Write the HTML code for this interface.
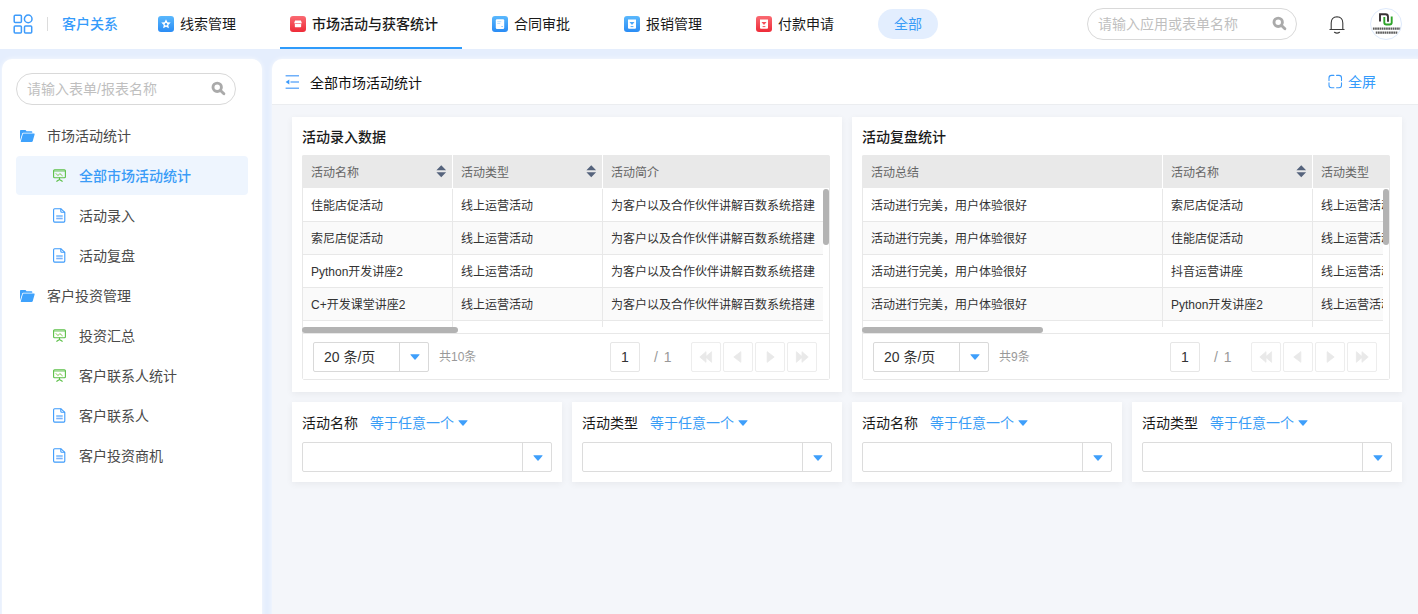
<!DOCTYPE html>
<html lang="zh-CN">
<head>
<meta charset="utf-8">
<title>全部市场活动统计</title>
<style>
*{box-sizing:border-box;margin:0;padding:0}
html,body{width:1418px;height:614px;overflow:hidden}
body{position:relative;background:#e5eefd;font-family:"Liberation Sans","Noto Sans CJK SC",sans-serif;font-size:14px;color:#333}
.abs{position:absolute}
.t{position:absolute;white-space:nowrap;line-height:20px;height:20px}
#hdr{position:absolute;left:0;top:0;width:1418px;height:49px;background:#fff}
.nav{position:absolute;top:14px;font-size:14px;line-height:20px;height:20px;white-space:nowrap;color:#1a1a1a}
.nico{position:absolute;top:16px;width:16px;height:16px;border-radius:3px;overflow:hidden}
.nico.b{background:linear-gradient(#5ab8fd,#2a8cf5)}
.nico.r{background:linear-gradient(#fa6a72,#ee2b38)}
.nico svg{position:absolute;left:0;top:0}
#side{position:absolute;left:2px;top:59px;width:260px;height:565px;background:#fff;border-radius:10px;box-shadow:0 0 5px rgba(255,255,255,.75)}
.sitem{position:absolute;left:77px;font-size:14px;line-height:20px;color:#4a4a4a;white-space:nowrap}
.sgrp{position:absolute;left:45px;font-size:14px;line-height:20px;color:#4a4a4a;white-space:nowrap}
.sic{position:absolute}
#main{position:absolute;left:272px;top:59px;width:1160px;height:565px;background:#f4f6fa;border-radius:10px 0 0 0;overflow:hidden;box-shadow:0 0 5px rgba(255,255,255,.75)}
#mbar{position:absolute;left:0;top:0;width:1160px;height:46px;background:#fff;border-bottom:1px solid #ebedf0}
.card{position:absolute;background:#fff;box-shadow:0 2px 7px rgba(0,0,0,.055)}
.ctitle{position:absolute;left:10px;top:10px;font-size:14px;font-weight:500;line-height:20px;color:#1a1a1a;white-space:nowrap}
.tbl{position:absolute;left:10px;top:38px;width:528px;height:225px;overflow:hidden;background:#fff;border-radius:2px}
.tbd{position:absolute;left:0;top:0;width:528px;height:225px;border:1px solid #e8e8e8;border-radius:2px}
.th{position:absolute;top:0;height:33px;background:#e9e9e9;font-size:12px;line-height:36px;color:#666;padding-left:8px;white-space:nowrap;border-left:1px solid #fff;overflow:hidden}
.th.f{border-left-color:#e9e9e9}
.td{position:absolute;top:0;height:33px;font-size:12px;line-height:34px;color:#333;padding-left:8px;white-space:nowrap;overflow:hidden;border-left:1px solid #e8e8e8;border-bottom:1px solid #e8e8e8}
.row{position:absolute;left:0;width:521px;height:33px;overflow:hidden}
.row.alt{background:#fafafa}
.sort{position:absolute;top:10px;width:10.500px;height:12.500px}
.hs{position:absolute;left:0;top:172px;height:6px;border-radius:3px;background:#b3b3b3}
.vs{position:absolute;left:521px;top:34px;width:6px;height:56px;border-radius:3px;background:#b3b3b3}
.pg{position:absolute;left:1px;top:178px;width:526px;height:46px;border-top:1px solid #e8e8e8;background:#fff}
.psel{position:absolute;left:10px;top:8px;width:116px;height:30px;border:1px solid #d9d9d9;border-radius:2px;font-size:14px;line-height:28px;padding-left:10px;color:#333}
.psel i{position:absolute;left:85px;top:0;width:1px;height:28px;background:#d9d9d9}
.caret{position:absolute;width:10px;height:6px}
.ptot{position:absolute;left:136px;top:13px;font-size:12px;line-height:20px;color:#999}
.pinp{position:absolute;left:307px;top:8px;width:30px;height:30px;border:1px solid #e6e6e6;border-radius:2px;text-align:center;font-size:14px;line-height:28px;color:#333}
.pof{position:absolute;left:351px;top:13px;font-size:14px;line-height:20px;color:#999;word-spacing:2px}
.pbtn{position:absolute;top:8px;width:30px;height:30px;border:1px solid #ededed;border-radius:2px}
.fl{position:absolute;left:10px;top:11px;font-size:14px;line-height:20px;color:#1a1a1a;white-space:nowrap}
.fo{position:absolute;left:78px;top:11px;font-size:14px;line-height:20px;color:#3a9df6;white-space:nowrap}
.fsel{position:absolute;left:10px;top:40px;width:250px;height:30px;border:1px solid #dcdcdc;border-radius:2px;background:#fff}
.fsel i{position:absolute;left:219px;top:0;width:1px;height:28px;background:#dcdcdc}
</style>
</head>
<body>
<div id="hdr">
  <svg class="abs" style="left:13px;top:14px" width="20" height="20" viewBox="0 0 20 20" fill="none" stroke="#3d9bfb" stroke-width="1.500"><rect x="1.200" y="1.200" width="7.200" height="7.200" rx="1"/><circle cx="15.200" cy="4.900" r="3.800"/><rect x="1.200" y="11.900" width="7.200" height="7.200" rx="1"/><rect x="11.500" y="11.900" width="7.200" height="7.200" rx="1"/></svg>
  <div class="abs" style="left:47px;top:17px;width:1px;height:14px;background:#dcdcdc"></div>
  <div class="nav" style="left:62px;color:#359bfb;font-weight:500">客户关系</div>
  <div class="nico b" style="left:158px"><svg width="16" height="16" viewBox="0.700 0.700 14.600 14.600"><path d="M8 3.6l1.3 2.7 3 .4-2.2 2.1.5 3L8 10.4 5.4 11.8l.5-3L3.700 6.700l3-.4z" fill="#fff"/><circle cx="8" cy="8.300" r="1.100" fill="#3d9ef8"/></svg></div>
  <div class="nav" style="left:180px">线索管理</div>
  <div class="nico r" style="left:290px"><svg width="16" height="16" viewBox="-1.400 -1.200 18.800 18.800"><path d="M4.600 4h6.800l1 2.600q-.1 1-1.100 1t-1.100-1q-.1 1-1.100 1T8 6.600q-.1 1-1.100 1t-1.100-1q-.1 1-1.100 1t-1.100-1z" fill="#fff"/><path d="M4.300 8.300h7.400v3.200q0 .5-.5.500H4.800q-.5 0-.5-.5z" fill="#fff"/></svg></div>
  <div class="nav" style="left:312px;font-weight:500">市场活动与获客统计</div>
  <div class="abs" style="left:280px;top:47px;width:182px;height:2px;background:#2e9bfb"></div>
  <div class="nico b" style="left:492px"><svg width="16" height="16" viewBox="0 0 16 16"><rect x="3.800" y="3.300" width="8.400" height="9.600" rx="1.200" fill="#fff"/><path d="M5.300 5.700h4M5.300 7.500h3" stroke="#bfe0fd" stroke-width="1"/><path d="M9 10h2.200l-1.100 1.300z" fill="#7cc0fb"/></svg></div>
  <div class="nav" style="left:514px">合同审批</div>
  <div class="nico b" style="left:624px"><svg width="16" height="16" viewBox="0 0 16 16"><path d="M4 3.500h8v8.300q0 1-1 1H5q-1 0-1-1z" fill="#fff"/><path d="M5.500 6h5L8 9z" fill="#4aa8fa"/><path d="M6.600 10.600h2.800" stroke="#4aa8fa" stroke-width="1"/></svg></div>
  <div class="nav" style="left:646px">报销管理</div>
  <div class="nico r" style="left:756px"><svg width="16" height="16" viewBox="0 0 16 16"><path d="M4 3.500h8v8.300q0 1-1 1H5q-1 0-1-1z" fill="#fff"/><path d="M5.500 6h5L8 9z" fill="#f4515b"/><path d="M6.600 10.600h2.800" stroke="#f4515b" stroke-width="1"/></svg></div>
  <div class="nav" style="left:778px">付款申请</div>
  <div class="abs" style="left:878px;top:9px;width:60px;height:30px;border-radius:15px;background:#e3eefe;color:#3a9cf7;font-size:14px;line-height:30px;text-align:center">全部</div>
  <div class="abs" style="left:1087px;top:8px;width:210px;height:32px;border:1px solid #d9d9d9;border-radius:16px;font-size:14px;line-height:30px;color:#bfbfbf;padding-left:10px">请输入应用或表单名称<svg class="abs" style="left:184px;top:7px" width="16" height="16" viewBox="0 0 16 16" fill="none" stroke="#aaa" stroke-width="2.900" stroke-linecap="round"><circle cx="6.200" cy="6.300" r="4.200"/><path d="M10 10L12.900 12.800"/></svg></div>
  <svg class="abs" style="left:1328px;top:14px" width="18" height="22" viewBox="0 0 18 22" fill="none" stroke="#3c3c3c" stroke-width="1.100" stroke-linecap="round"><path d="M1.900 15.500h14.200M3.200 15.300V9q0-6 5.800-6.300Q14.800 3 14.800 9v6.300"/><path d="M6.500 18.300q2.500 1.600 5 0" stroke-width="1.200"/></svg>
  <div class="abs" style="left:1370px;top:8px;width:32px;height:32px;border-radius:16px;border:1px solid #deeafc;background:#fff;overflow:hidden">
<svg class="abs" style="left:-1px;top:-1px" width="32" height="32" viewBox="0 0 32 32" fill="none"><path d="M10 13.500V6.300h5.500q2.500 0 2.500 2.500v5" stroke="#3a3335" stroke-width="1.900"/><path d="M14.300 9v5.500q0 2 2 2h3.400q2 0 2-2V8.500" stroke="#2fa52a" stroke-width="1.900"/><path d="M2.900 20.600h27.400M5.800 24.700h21.500" stroke="#5c5c5c" stroke-width="2.200" stroke-dasharray="1.700 .5"/></svg></div>
</div>

<div id="side">
  <div class="abs" style="left:14px;top:14px;width:220px;height:32px;border:1px solid #d9d9d9;border-radius:16px;font-size:14px;line-height:30px;color:#bfbfbf;padding-left:10px">请输入表单/报表名称<svg class="abs" style="left:194px;top:7px" width="16" height="16" viewBox="0 0 16 16" fill="none" stroke="#aaa" stroke-width="2.900" stroke-linecap="round"><circle cx="6.200" cy="6.300" r="4.200"/><path d="M10 10L12.900 12.800"/></svg></div>
  <div class="abs" style="left:14px;top:97px;width:232px;height:39px;background:#eef5fe;border-radius:4px"></div>
  <svg class="sic" style="left:18px;top:71px" width="15" height="13" viewBox="0 0 15 13"><path d="M0 .8q0-.8.800-.8h4.700l1 1.300h5q.8 0 .8.800v.7H3.300q-.8 0-1.100.8L0 10.500z" fill="#3fa2fc"/><path d="M3.300 3.600h10.800q.8 0 .5.800L12.700 11.300q-.3.800-1.100.8H1.300q-.8 0-.5-.8l1.900-6.900q.2-.8.800-.8z" fill="#3fa2fc"/></svg>
  <div class="sgrp" style="top:67px">市场活动统计</div>
  <svg class="sic" style="left:50.500px;top:110px" width="13" height="13" viewBox="0 0 13 13" fill="none" stroke="#5cc048" stroke-width="1.100"><rect x=".6" y=".8" width="11.800" height="8" rx="1"/><path d="M.6 2h11.800" stroke-width=".9"/><path d="M6.500 8.800v1.600M3.800 12.300l2.700-1.800 2.700 1.800" stroke-linecap="round"/><path d="M2.800 4.300l2.200 2.300 1.800-2 2.800 2.300" stroke="#7ec94a" stroke-width="1"/></svg>
  <div class="sitem" style="top:107px;color:#3a9cf7;font-weight:500">全部市场活动统计</div>
  <svg class="sic" style="left:51px;top:149px" width="13" height="15" viewBox="0 0 13 15" fill="none" stroke="#3d9bfb" stroke-width="1.100" stroke-linejoin="round"><path d="M1.600.7h6.200l4 3.600v8.800q0 1-1 1H1.600q-1 0-1-1V1.700q0-1 1-1z"/><path d="M7.800.7v2.600q0 1 1 1h3"/><path d="M3.200 8h6.500"/><path d="M3.200 10.500h6.500" stroke-width="1.600" stroke="#7ab2fb"/></svg>
  <div class="sitem" style="top:147px">活动录入</div>
  <svg class="sic" style="left:51px;top:189px" width="13" height="15" viewBox="0 0 13 15" fill="none" stroke="#3d9bfb" stroke-width="1.100" stroke-linejoin="round"><path d="M1.600.7h6.200l4 3.600v8.800q0 1-1 1H1.600q-1 0-1-1V1.700q0-1 1-1z"/><path d="M7.800.7v2.600q0 1 1 1h3"/><path d="M3.200 8h6.500"/><path d="M3.200 10.500h6.500" stroke-width="1.600" stroke="#7ab2fb"/></svg>
  <div class="sitem" style="top:187px">活动复盘</div>
  <svg class="sic" style="left:18px;top:231px" width="15" height="13" viewBox="0 0 15 13"><path d="M0 .8q0-.8.800-.8h4.700l1 1.300h5q.8 0 .8.800v.7H3.300q-.8 0-1.100.8L0 10.500z" fill="#3fa2fc"/><path d="M3.300 3.600h10.800q.8 0 .5.800L12.700 11.300q-.3.800-1.100.8H1.300q-.8 0-.5-.8l1.900-6.900q.2-.8.800-.8z" fill="#3fa2fc"/></svg>
  <div class="sgrp" style="top:227px">客户投资管理</div>
  <svg class="sic" style="left:50.500px;top:270px" width="13" height="13" viewBox="0 0 13 13" fill="none" stroke="#5cc048" stroke-width="1.100"><rect x=".6" y=".8" width="11.800" height="8" rx="1"/><path d="M.6 2h11.800" stroke-width=".9"/><path d="M6.500 8.800v1.600M3.800 12.300l2.700-1.800 2.700 1.800" stroke-linecap="round"/><path d="M2.800 4.300l2.200 2.300 1.800-2 2.800 2.300" stroke="#7ec94a" stroke-width="1"/></svg>
  <div class="sitem" style="top:267px">投资汇总</div>
  <svg class="sic" style="left:50.500px;top:310px" width="13" height="13" viewBox="0 0 13 13" fill="none" stroke="#5cc048" stroke-width="1.100"><rect x=".6" y=".8" width="11.800" height="8" rx="1"/><path d="M.6 2h11.800" stroke-width=".9"/><path d="M6.500 8.800v1.600M3.800 12.300l2.700-1.800 2.700 1.800" stroke-linecap="round"/><path d="M2.800 4.300l2.200 2.300 1.800-2 2.800 2.300" stroke="#7ec94a" stroke-width="1"/></svg>
  <div class="sitem" style="top:307px">客户联系人统计</div>
  <svg class="sic" style="left:51px;top:349px" width="13" height="15" viewBox="0 0 13 15" fill="none" stroke="#3d9bfb" stroke-width="1.100" stroke-linejoin="round"><path d="M1.600.7h6.200l4 3.600v8.800q0 1-1 1H1.600q-1 0-1-1V1.700q0-1 1-1z"/><path d="M7.800.7v2.600q0 1 1 1h3"/><path d="M3.200 8h6.500"/><path d="M3.200 10.500h6.500" stroke-width="1.600" stroke="#7ab2fb"/></svg>
  <div class="sitem" style="top:347px">客户联系人</div>
  <svg class="sic" style="left:51px;top:389px" width="13" height="15" viewBox="0 0 13 15" fill="none" stroke="#3d9bfb" stroke-width="1.100" stroke-linejoin="round"><path d="M1.600.7h6.200l4 3.600v8.800q0 1-1 1H1.600q-1 0-1-1V1.700q0-1 1-1z"/><path d="M7.800.7v2.600q0 1 1 1h3"/><path d="M3.200 8h6.500"/><path d="M3.200 10.500h6.500" stroke-width="1.600" stroke="#7ab2fb"/></svg>
  <div class="sitem" style="top:387px">客户投资商机</div>
</div>

<div id="main">
  <div id="mbar">
    <svg class="abs" style="left:13px;top:15px" width="15" height="16" viewBox="0 0 15 16" fill="none" stroke="#6fb0fa" stroke-width="1.500"><path d="M.6 1.700H14M5.500 8H14M.6 14.300H14"/><path d="M4.300 5.600v4.800L.6 8z" fill="#3d9bfb" stroke="none"/></svg>
    <div class="t" style="left:38px;top:14px;font-size:14px;color:#111">全部市场活动统计</div>
    <svg class="abs" style="left:1056px;top:15px" width="15" height="15" viewBox="0 0 15 15" fill="none" stroke="#3d9bfb" stroke-width="1.100" stroke-linecap="round"><path d="M5.900 1.400H3.500Q1 1.400 1 3.900V6.600M8.600 1.400H11Q13.500 1.400 13.500 3.900V6.600M5.900 13.800H3.500Q1 13.800 1 11.300V8.800M8.600 13.800H11Q13.500 13.800 13.500 11.300V8.800"/></svg>
    <div class="t" style="left:1076px;top:13px;font-size:14px;color:#359bfb">全屏</div>
  </div>
  <div class="card" style="left:20px;top:58px;width:550px;height:275px">
    <div class="ctitle">活动录入数据</div>
    <div class="tbl">
      <div class="tbd"></div>
      <div class="th f" style="left:0px;width:150px">活动名称<svg class="sort" style="left:133px" viewBox="0 0 10.500 12.500" preserveAspectRatio="none"><path d="M5.250 0.200L10.100 5.200H0.400Z M5.250 12.300L10.100 7.300H0.400Z" fill="#55637c"/></svg></div><div class="th" style="left:150px;width:150px">活动类型<svg class="sort" style="left:133px" viewBox="0 0 10.500 12.500" preserveAspectRatio="none"><path d="M5.250 0.200L10.100 5.200H0.400Z M5.250 12.300L10.100 7.300H0.400Z" fill="#55637c"/></svg></div><div class="th" style="left:300px;width:228px">活动简介</div><div class="row" style="top:34px"><div class="td" style="left:0px;width:150px">佳能店促活动</div><div class="td" style="left:150px;width:150px">线上运营活动</div><div class="td" style="left:300px;width:228px">为客户以及合作伙伴讲解百数系统搭建</div></div><div class="row alt" style="top:67px"><div class="td" style="left:0px;width:150px">索尼店促活动</div><div class="td" style="left:150px;width:150px">线上运营活动</div><div class="td" style="left:300px;width:228px">为客户以及合作伙伴讲解百数系统搭建</div></div><div class="row" style="top:100px"><div class="td" style="left:0px;width:150px">Python开发讲座2</div><div class="td" style="left:150px;width:150px">线上运营活动</div><div class="td" style="left:300px;width:228px">为客户以及合作伙伴讲解百数系统搭建</div></div><div class="row alt" style="top:133px"><div class="td" style="left:0px;width:150px">C+开发课堂讲座2</div><div class="td" style="left:150px;width:150px">线上运营活动</div><div class="td" style="left:300px;width:228px">为客户以及合作伙伴讲解百数系统搭建</div></div><div class="row" style="top:166px"><div class="td" style="left:0px;width:150px"></div><div class="td" style="left:150px;width:150px"></div><div class="td" style="left:300px;width:228px"></div></div>
      <div class="abs" style="left:521px;top:34px;width:6px;height:138px;background:#fff"></div>
      <div class="abs" style="left:1px;top:172px;width:526px;height:6px;background:#fff"></div>
      <div class="hs" style="width:156px"></div>
      <div class="vs"></div>
      <div class="pg">
      <div class="psel">20 条/页<i></i><svg class="caret" style="left:96px;top:11px" viewBox="0 0 10 6"><path d="M0.8 0.3H9.2Q9.9 0.5 9.4 1.1L5.5 5.5Q5 6 4.5 5.5L0.6 1.1Q0.1 0.5 0.8 0.3Z" fill="#3e9ffb"/></svg></div>
      <div class="ptot">共10条</div>
      <div class="pinp">1</div>
      <div class="pof">/ 1</div>
      <div class="pbtn" style="left:388px"><svg class="abs" style="left:6px;top:7px" width="16" height="14" viewBox="0 0 16 14" fill="#e9e9e9" stroke="#e9e9e9" stroke-width="0.800" stroke-linejoin="round"><path d="M8 1.700L1.800 7L8 12.300Z M13.600 1.700L7.400 7L13.600 12.300Z"/></svg></div><div class="pbtn" style="left:420px"><svg class="abs" style="left:6px;top:7px" width="16" height="14" viewBox="0 0 16 14" fill="#e9e9e9" stroke="#e9e9e9" stroke-width="0.800" stroke-linejoin="round"><path d="M10.800 1.700L3.800 7L10.800 12.300Z"/></svg></div><div class="pbtn" style="left:452px"><svg class="abs" style="left:6px;top:7px" width="16" height="14" viewBox="0 0 16 14" fill="#e9e9e9" stroke="#e9e9e9" stroke-width="0.800" stroke-linejoin="round"><path d="M5.200 1.700L12.200 7L5.200 12.300Z"/></svg></div><div class="pbtn" style="left:484px"><svg class="abs" style="left:6px;top:7px" width="16" height="14" viewBox="0 0 16 14" fill="#e9e9e9" stroke="#e9e9e9" stroke-width="0.800" stroke-linejoin="round"><path d="M8 1.700L14.200 7L8 12.300Z M2.400 1.700L8.600 7L2.400 12.300Z"/></svg></div>
    </div>
    </div>
  </div>
  <div class="card" style="left:580px;top:58px;width:550px;height:275px">
    <div class="ctitle">活动复盘统计</div>
    <div class="tbl">
      <div class="tbd"></div>
      <div class="th f" style="left:0px;width:300px">活动总结</div><div class="th" style="left:300px;width:150px">活动名称<svg class="sort" style="left:133px" viewBox="0 0 10.500 12.500" preserveAspectRatio="none"><path d="M5.250 0.200L10.100 5.200H0.400Z M5.250 12.300L10.100 7.300H0.400Z" fill="#55637c"/></svg></div><div class="th" style="left:450px;width:78px">活动类型</div><div class="row" style="top:34px"><div class="td" style="left:0px;width:300px">活动进行完美，用户体验很好</div><div class="td" style="left:300px;width:150px">索尼店促活动</div><div class="td" style="left:450px;width:78px">线上运营活动</div></div><div class="row alt" style="top:67px"><div class="td" style="left:0px;width:300px">活动进行完美，用户体验很好</div><div class="td" style="left:300px;width:150px">佳能店促活动</div><div class="td" style="left:450px;width:78px">线上运营活动</div></div><div class="row" style="top:100px"><div class="td" style="left:0px;width:300px">活动进行完美，用户体验很好</div><div class="td" style="left:300px;width:150px">抖音运营讲座</div><div class="td" style="left:450px;width:78px">线上运营活动</div></div><div class="row alt" style="top:133px"><div class="td" style="left:0px;width:300px">活动进行完美，用户体验很好</div><div class="td" style="left:300px;width:150px">Python开发讲座2</div><div class="td" style="left:450px;width:78px">线上运营活动</div></div><div class="row" style="top:166px"><div class="td" style="left:0px;width:300px"></div><div class="td" style="left:300px;width:150px"></div><div class="td" style="left:450px;width:78px"></div></div>
      <div class="abs" style="left:521px;top:34px;width:6px;height:138px;background:#fff"></div>
      <div class="abs" style="left:1px;top:172px;width:526px;height:6px;background:#fff"></div>
      <div class="hs" style="width:181px"></div>
      <div class="vs"></div>
      <div class="pg">
      <div class="psel">20 条/页<i></i><svg class="caret" style="left:96px;top:11px" viewBox="0 0 10 6"><path d="M0.8 0.3H9.2Q9.9 0.5 9.4 1.1L5.5 5.5Q5 6 4.5 5.5L0.6 1.1Q0.1 0.5 0.8 0.3Z" fill="#3e9ffb"/></svg></div>
      <div class="ptot">共9条</div>
      <div class="pinp">1</div>
      <div class="pof">/ 1</div>
      <div class="pbtn" style="left:388px"><svg class="abs" style="left:6px;top:7px" width="16" height="14" viewBox="0 0 16 14" fill="#e9e9e9" stroke="#e9e9e9" stroke-width="0.800" stroke-linejoin="round"><path d="M8 1.700L1.800 7L8 12.300Z M13.600 1.700L7.400 7L13.600 12.300Z"/></svg></div><div class="pbtn" style="left:420px"><svg class="abs" style="left:6px;top:7px" width="16" height="14" viewBox="0 0 16 14" fill="#e9e9e9" stroke="#e9e9e9" stroke-width="0.800" stroke-linejoin="round"><path d="M10.800 1.700L3.800 7L10.800 12.300Z"/></svg></div><div class="pbtn" style="left:452px"><svg class="abs" style="left:6px;top:7px" width="16" height="14" viewBox="0 0 16 14" fill="#e9e9e9" stroke="#e9e9e9" stroke-width="0.800" stroke-linejoin="round"><path d="M5.200 1.700L12.200 7L5.200 12.300Z"/></svg></div><div class="pbtn" style="left:484px"><svg class="abs" style="left:6px;top:7px" width="16" height="14" viewBox="0 0 16 14" fill="#e9e9e9" stroke="#e9e9e9" stroke-width="0.800" stroke-linejoin="round"><path d="M8 1.700L14.200 7L8 12.300Z M2.400 1.700L8.600 7L2.400 12.300Z"/></svg></div>
    </div>
    </div>
  </div>
  <div class="card" style="left:20px;top:343px;width:270px;height:80px">
    <div class="fl">活动名称</div><div class="fo">等于任意一个</div><svg class="caret" style="left:166px;top:18px" viewBox="0 0 10 6"><path d="M0.8 0.3H9.2Q9.9 0.5 9.4 1.1L5.5 5.5Q5 6 4.5 5.5L0.6 1.1Q0.1 0.5 0.8 0.3Z" fill="#3e9ffb"/></svg>
    <div class="fsel"><i></i><svg class="caret" style="left:230px;top:12px" viewBox="0 0 10 6"><path d="M0.8 0.3H9.2Q9.9 0.5 9.4 1.1L5.5 5.5Q5 6 4.5 5.5L0.6 1.1Q0.1 0.5 0.8 0.3Z" fill="#3e9ffb"/></svg></div>
  </div><div class="card" style="left:300px;top:343px;width:270px;height:80px">
    <div class="fl">活动类型</div><div class="fo">等于任意一个</div><svg class="caret" style="left:166px;top:18px" viewBox="0 0 10 6"><path d="M0.8 0.3H9.2Q9.9 0.5 9.4 1.1L5.5 5.5Q5 6 4.5 5.5L0.6 1.1Q0.1 0.5 0.8 0.3Z" fill="#3e9ffb"/></svg>
    <div class="fsel"><i></i><svg class="caret" style="left:230px;top:12px" viewBox="0 0 10 6"><path d="M0.8 0.3H9.2Q9.9 0.5 9.4 1.1L5.5 5.5Q5 6 4.5 5.5L0.6 1.1Q0.1 0.5 0.8 0.3Z" fill="#3e9ffb"/></svg></div>
  </div><div class="card" style="left:580px;top:343px;width:270px;height:80px">
    <div class="fl">活动名称</div><div class="fo">等于任意一个</div><svg class="caret" style="left:166px;top:18px" viewBox="0 0 10 6"><path d="M0.8 0.3H9.2Q9.9 0.5 9.4 1.1L5.5 5.5Q5 6 4.5 5.5L0.6 1.1Q0.1 0.5 0.8 0.3Z" fill="#3e9ffb"/></svg>
    <div class="fsel"><i></i><svg class="caret" style="left:230px;top:12px" viewBox="0 0 10 6"><path d="M0.8 0.3H9.2Q9.9 0.5 9.4 1.1L5.5 5.5Q5 6 4.5 5.5L0.6 1.1Q0.1 0.5 0.8 0.3Z" fill="#3e9ffb"/></svg></div>
  </div><div class="card" style="left:860px;top:343px;width:270px;height:80px">
    <div class="fl">活动类型</div><div class="fo">等于任意一个</div><svg class="caret" style="left:166px;top:18px" viewBox="0 0 10 6"><path d="M0.8 0.3H9.2Q9.9 0.5 9.4 1.1L5.5 5.5Q5 6 4.5 5.5L0.6 1.1Q0.1 0.5 0.8 0.3Z" fill="#3e9ffb"/></svg>
    <div class="fsel"><i></i><svg class="caret" style="left:230px;top:12px" viewBox="0 0 10 6"><path d="M0.8 0.3H9.2Q9.9 0.5 9.4 1.1L5.5 5.5Q5 6 4.5 5.5L0.6 1.1Q0.1 0.5 0.8 0.3Z" fill="#3e9ffb"/></svg></div>
  </div>
</div>
</body>
</html>
